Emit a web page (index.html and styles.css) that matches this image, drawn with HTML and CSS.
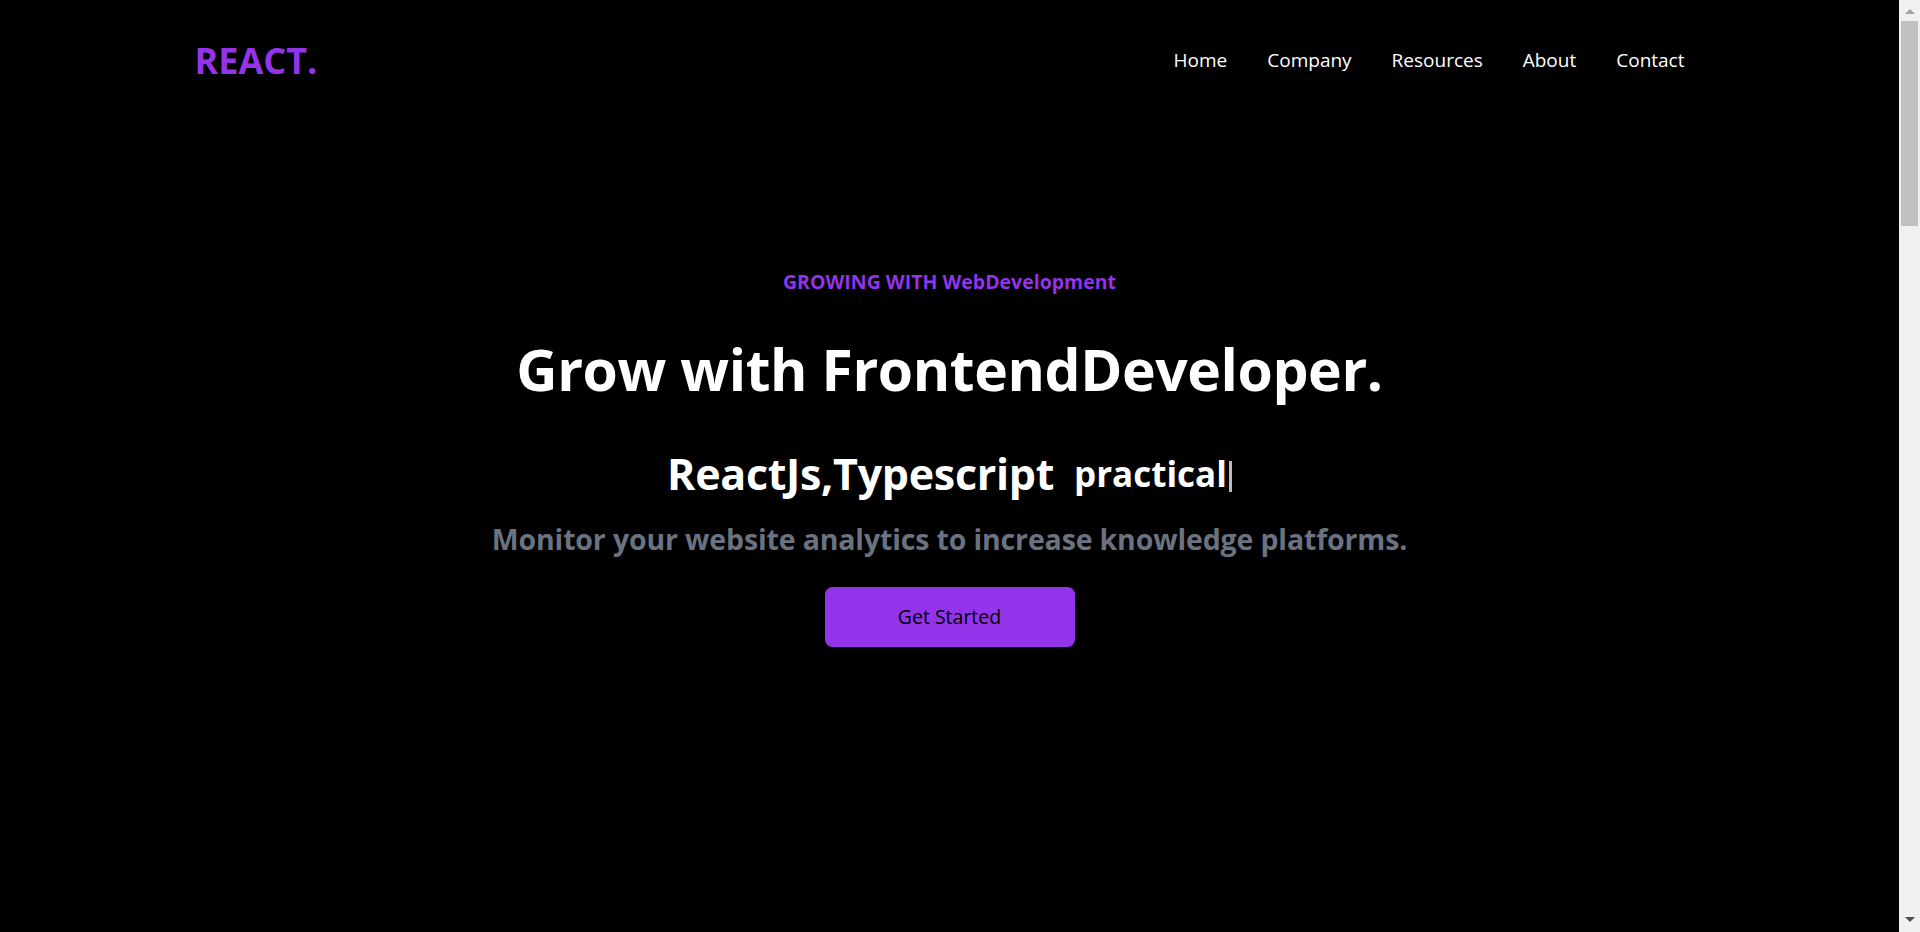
FILE: index.html
```html
<!DOCTYPE html>
<html lang="en">
<head>
<meta charset="utf-8">
<title>React</title>
<link rel="stylesheet" href="styles.css">
</head>
<body>
<header class="header">
  <h1 class="logo">REACT.</h1>
  <ul class="nav-list">
    <li class="nav-item">Home</li>
    <li class="nav-item">Company</li>
    <li class="nav-item">Resources</li>
    <li class="nav-item">About</li>
    <li class="nav-item">Contact</li>
  </ul>
</header>
<section class="hero">
  <p class="eyebrow">GROWING WITH WebDevelopment</p>
  <h1 class="title">Grow with FrontendDeveloper.</h1>
  <div class="typed-row">
    <p class="typed-static">ReactJs,Typescript</p>
    <span class="typed-text">practical<span class="cursor"></span></span>
  </div>
  <p class="lead">Monitor your website analytics to increase knowledge platforms.</p>
  <button class="btn">Get Started</button>
</section>
<div class="scrollbar">
  <span class="arrow arrow-up"></span>
  <span class="thumb"></span>
  <span class="arrow arrow-down"></span>
</div>
</body>
</html>
```
FILE: styles.css
```css
*, *::before, *::after {
  box-sizing: border-box;
}

html, body {
  background: #000;
}

body {
  margin: 0 21px 0 0;
  color: #fff;
  font-family: "Open Sans", "Noto Sans", sans-serif;
  overflow: hidden;
}

.header {
  max-width: 1550px;
  margin: 0 auto;
  padding: 0 20px;
  height: 120px;
  display: flex;
  justify-content: space-between;
  align-items: center;
}

.logo {
  margin: 0;
  font-size: 36px;
  line-height: 45px;
  font-weight: 700;
  color: #9333ea;
}

.nav-list {
  display: flex;
  list-style: none;
  margin: 0;
  padding: 0;
}

.nav-item {
  padding: 20px;
  font-size: 19px;
  line-height: 30px;
}

.hero {
  max-width: 1000px;
  margin: -120px auto 0;
  height: 932px;
  display: flex;
  flex-direction: column;
  justify-content: center;
  text-align: center;
}

.eyebrow {
  margin: 0;
  padding: 10px;
  font-size: 19.5px;
  line-height: 35px;
  font-weight: 700;
  color: #9333ea;
}

.title {
  margin: 0;
  padding: 30px 0;
  font-size: 57px;
  line-height: 60px;
  letter-spacing: -0.4px;
  font-weight: 700;
}

.typed-row {
  display: flex;
  justify-content: center;
  align-items: center;
}

.typed-static {
  margin: 0;
  padding: 20px 0;
  font-size: 43px;
  line-height: 50px;
  letter-spacing: -0.3px;
  font-weight: 700;
}

.typed-text {
  padding-left: 20px;
  font-size: 35px;
  line-height: 45px;
  font-weight: 700;
}

.cursor {
  display: inline-block;
  width: 3px;
  height: 31px;
  margin-left: 2px;
  vertical-align: -5px;
  background: #bdbdbd;
}

.lead {
  margin: 0;
  font-size: 28.5px;
  line-height: 40px;
  letter-spacing: -0.15px;
  font-weight: 700;
  color: #6b7280;
}

.btn {
  display: block;
  width: 250px;
  margin: 28px auto 32px;
  padding: 15px 0;
  border: 0;
  border-radius: 7.5px;
  background: #9333ea;
  color: #000;
  font-family: inherit;
  font-size: 19.5px;
  line-height: 30px;
  font-weight: 500;
}

.scrollbar {
  position: fixed;
  top: 0;
  right: 0;
  width: 21px;
  height: 100vh;
  background: #f1f1f1;
}

.thumb {
  position: absolute;
  top: 21px;
  left: 2px;
  width: 17px;
  height: 205px;
  background: #c1c1c1;
}

.arrow {
  position: absolute;
  left: 5.5px;
  width: 0;
  height: 0;
  border-left: 5px solid transparent;
  border-right: 5px solid transparent;
}

.arrow-up {
  top: 9px;
  border-bottom: 5px solid #a3a3a3;
}

.arrow-down {
  top: 917px;
  border-top: 5px solid #505050;
}
```
